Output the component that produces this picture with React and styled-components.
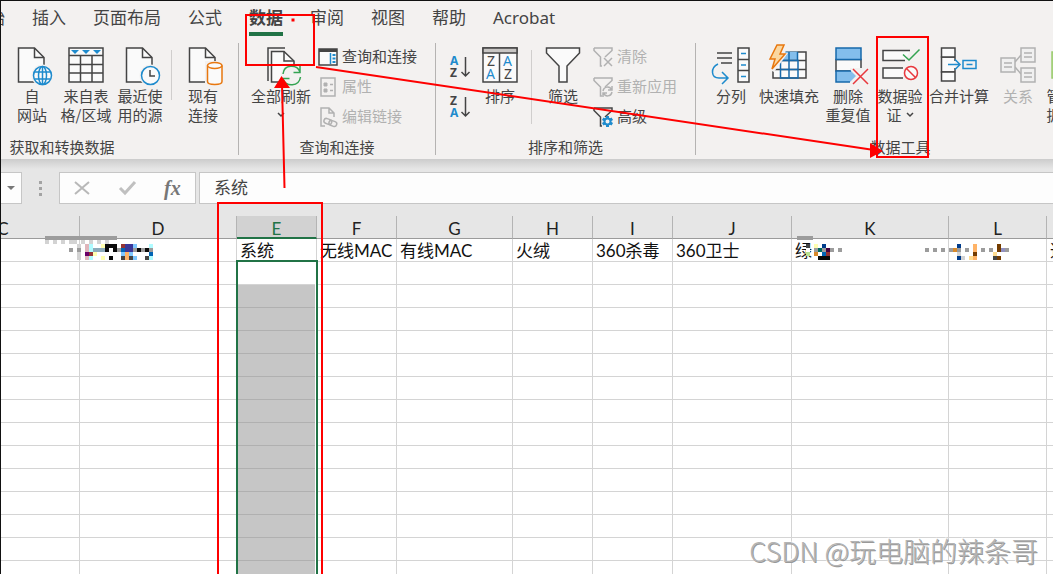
import styled, { createGlobalStyle } from "styled-components"

const GlobalStyle = createGlobalStyle`
    * {
        box-sizing: border-box;
    }

    body {
        margin: 0;
        background: #fff;
        font-family: "Noto Sans CJK SC", sans-serif;
        color: #444;
        overflow: hidden;
    }

    button, input {
        font: inherit;
        color: inherit;
        background: none;
        border: 0;
        padding: 0;
        margin: 0;
    }

    svg {
        display: block;
        overflow: visible;
        flex: none;
    }
`

const Page = styled.div`
    position: relative;
    height: 100vh;
    overflow: hidden;
    border-top: 1px solid #111;
    border-left: 1px solid #111;
    background: #fff;
`

/* ---------- ribbon ---------- */

const Tabs = styled.nav`
    display: flex;
    gap: 27px;
    height: 35px;
    margin-left: -30px;
    background: #f3f1f0;
    font-size: 17px;
`

const Tab = styled.button`
    flex: none;
    height: 35px;
    padding-top: 3px;
    line-height: 28px;
    font-family: "Noto Sans", "Noto Sans CJK SC", sans-serif;
    font-weight: ${({ $active }) => ($active ? 700 : 400)};
    border-bottom: 4px solid ${({ $active }) => ($active ? "#217346" : "transparent")};
    white-space: nowrap;
`

const Ribbon = styled.div`
    display: flex;
    height: 123px;
    padding: 7px 0 4px;
    background: #f3f1f0;
    overflow: hidden;
    font-size: 15px;
`

const Group = styled.section`
    display: flex;
    flex-direction: column;
    flex: none;
    width: ${({ $width }) => $width}px;
    margin-left: ${({ $shift }) => $shift || 0}px;
    border-right: 1px solid #b5b3b2;
`

const GroupBody = styled.div`
    display: flex;
    flex: 1;
    align-items: flex-start;
    justify-content: ${({ $end }) => ($end ? "flex-end" : "flex-start")};
    padding: 0 ${({ $right }) => $right || 0}px 0 ${({ $left }) => $left || 0}px;
`

const GroupLabel = styled.div`
    line-height: 16px;
    text-align: center;
`

const BigButton = styled.button`
    display: flex;
    flex-direction: column;
    align-items: center;
    flex: none;
    width: ${({ $width }) => $width || 54}px;
    padding-top: 4px;
    line-height: 19px;
    color: ${({ disabled }) => (disabled ? "#b1b1b1" : "#444")};
    white-space: nowrap;

    svg {
        margin-bottom: 1px;
    }
`

const LabelLine = styled.span`
    display: flex;
    align-items: center;
    justify-content: center;
    gap: 4px;
    height: 19px;

    svg {
        margin: 0;
    }
`

const Divider = styled.div`
    flex: none;
    width: 1px;
    height: ${({ $tall }) => ($tall ? 74 : 50)}px;
    margin: 7px 4px 0;
    background: #d0cecd;
`

const SmallList = styled.div`
    display: flex;
    flex-direction: column;
    margin: -1px 0 0 ${({ $left }) => $left || 0}px;
`

const SmallButton = styled.button`
    display: flex;
    align-items: center;
    gap: 4px;
    height: 30px;
    color: ${({ disabled }) => (disabled ? "#b1b1b1" : "#444")};
    white-space: nowrap;
`

const SmallLabel = styled.span`
    padding-bottom: 2px;
    line-height: 20px;
`

const SortColumn = styled.div`
    display: flex;
    flex-direction: column;
    gap: 16px;
    padding: 12px 2px 0 13px;
`

/* ---------- formula bar ---------- */

const FormulaBar = styled.div`
    display: flex;
    height: 57px;
    padding: 13px 0 12px;
    background: linear-gradient(#cccccc, #e6e6e6 10px);
`

const NameBox = styled.button`
    display: flex;
    align-items: center;
    justify-content: center;
    width: 21px;
    background: #fdfdfd;
    border: 1px solid #c6c6c6;
    border-left: 0;
`

const Grip = styled.div`
    display: flex;
    flex-direction: column;
    align-items: center;
    justify-content: center;
    gap: 3px;
    width: 37px;

    i {
        width: 3px;
        height: 3px;
        background: #a3a3a3;
    }
`

const FormulaActions = styled.div`
    display: flex;
    align-items: center;
    justify-content: space-around;
    width: 137px;
    margin-right: 3px;
    background: #fdfdfd;
    border: 1px solid #c6c6c6;
`

const FxButton = styled.button`
    font: italic bold 20px/24px "Liberation Serif", serif;
    color: #777;
`

const FormulaInput = styled.input`
    flex: 1;
    min-width: 0;
    padding: 0 14px 3px;
    background: #fdfdfd;
    border: 1px solid #c6c6c6;
    border-right: 0;
    font-size: 17px;
    outline: 0;
`

/* ---------- sheet ---------- */

const Sheet = styled.div`
    overflow: hidden;
`

const Table = styled.table`
    width: calc(100% + 174px);
    margin-left: -74px;
    table-layout: fixed;
    border-collapse: separate;
    border-spacing: 0;
    font-family: Lato, "Noto Sans CJK SC", sans-serif;
    font-size: 17px;
    color: #111;
`

const ColumnHead = styled.th`
    height: 23px;
    padding: ${({ $selected }) => ($selected ? 4 : 3)}px 0 0;
    line-height: ${({ $selected }) => ($selected ? 17 : 18)}px;
    font-weight: 400;
    color: ${({ $selected }) => ($selected ? "#217346" : "#222")};
    background: ${({ $selected }) => ($selected ? "#d2d2d2" : "#e6e6e6")};
    border-right: 1px solid #b4b4b4;
    border-bottom: ${({ $selected }) => ($selected ? "2px solid #217346" : "1px solid #9b9b9b")};
`

const Cell = styled.td`
    position: relative;
    height: 23px;
    padding: 2px 0 0 3px;
    line-height: 20px;
    white-space: nowrap;
    background: ${({ $filled }) => ($filled ? "#c6c6c6" : "#fff")};
    border-right: 1px solid #d4d4d4;
    border-bottom: 1px solid ${({ $filled }) => ($filled ? "#b0b0b0" : "#d4d4d4")};
`

const SelectionFrame = styled.div`
    position: absolute;
    z-index: 1;
    top: -2px;
    left: -1px;
    right: -2px;
    height: 400px;
    border: 2px solid #217346;
    box-shadow: inset -1px 0 0 #fff;
`

const Overlay = styled.svg`
    position: absolute;
    top: -1px;
    left: -1px;
    z-index: 2;
    pointer-events: none;
`

const Watermark = styled.div`
    position: absolute;
    right: 15px;
    bottom: 6px;
    z-index: 3;
    font-size: 27px;
    line-height: 34px;
    font-weight: 300;
    color: #b4b4b4;
    text-shadow: 1px 1px 0 #999, -1px -1px 0 #fff;
    white-space: nowrap;
`

/* ---------- icons ---------- */

const INK = "#444"
const BLUE = "#1e8bcd"
const PALE = "#b1b1b1"
const BG = "#f3f1f0"

const Icon = ({ w = 36, h = 38, children, ink = INK }) => (
    <svg width={w} height={h} fill="none" stroke={ink} strokeWidth="1.5" aria-hidden="true">
        {children}
    </svg>
)

const PageShape = () => (
    <>
        <path d="M4.5 1H20.5L30 10.5V35H4.5Z" fill="#fafafa" />
        <path d="M20.5 1V10.5H30" />
    </>
)

const WebIcon = () => (
    <Icon>
        <PageShape />
        <circle cx="28.5" cy="28.5" r="11" fill={BG} stroke="none" />
        <g stroke={BLUE}>
            <circle cx="28.5" cy="28.5" r="9" fill="#fafafa" />
            <ellipse cx="28.5" cy="28.5" rx="4" ry="9" />
            <path d="M28.5 19.5V37.5M20.5 25H36.5M20.5 32H36.5" />
        </g>
    </Icon>
)

const TableIcon = () => (
    <Icon>
        <path d="M1 1H35V35H1Z" fill="#fafafa" />
        <path d="M1 8.5H35M1 17.5H35M1 26H35M12.5 8V35M24 8V35" />
        <path d="M3 3h8l-4 4zM14 3h8l-4 4zM25 3h8l-4 4z" fill={BLUE} stroke="none" />
    </Icon>
)

const RecentIcon = () => (
    <Icon>
        <PageShape />
        <circle cx="28.5" cy="28.5" r="11" fill={BG} stroke="none" />
        <circle cx="28.5" cy="28.5" r="9" fill="#fafafa" stroke={BLUE} />
        <path d="M28 23V29H33" />
    </Icon>
)

const ConnectionIcon = () => (
    <Icon>
        <PageShape />
        <path d="M20 14H38V38H20Z" fill={BG} stroke="none" />
        <g stroke="#e8770e">
            <path d="M22.5 18.5V34.5C22.5 38.5 37 38.5 37 34.5V18.5" fill="#fafafa" />
            <ellipse cx="29.75" cy="18.5" rx="7.25" ry="3" fill="#fafafa" />
        </g>
    </Icon>
)

const RefreshIcon = () => (
    <Icon>
        <path d="M5 34V1H22" />
        <path d="M8.5 4.5H21L31 14V35H8.5Z" fill="#fafafa" />
        <path d="M21 4.5V14H31" />
        <circle cx="28.5" cy="28.5" r="11" fill={BG} stroke="none" />
        <path d="M20 27C21 17 34 17 37 25M37 19V25.5H30.5M37.5 30C36 40 23 40 20 32M20 38V31.5H26.5" stroke="#34a352" />
    </Icon>
)

const QueryIcon = () => (
    <Icon w={20} h={18}>
        <path d="M1 1H19V17H1Z" fill="#fafafa" />
        <path d="M1 2.5H19" strokeWidth="3" />
        <path d="M12.5 5V16" stroke={BLUE} />
        <path d="M14.5 7H17.5M14.5 10.5H17.5M14.5 14H17.5" stroke={BLUE} strokeWidth="2" />
    </Icon>
)

const PropsIcon = () => (
    <Icon w={20} h={20} ink={PALE}>
        <path d="M3 1H17V19H3Z" />
        <path d="M6 6H9V9H6ZM6 12H9V15H6Z" fill={PALE} strokeWidth="1" />
        <path d="M12 7.5H15M12 13.5H15" />
    </Icon>
)

const EditLinkIcon = () => (
    <Icon w={20} h={20} ink={PALE}>
        <path d="M7 19H3V1H11L16 6V10M11 1V6H16" />
        <rect x="6" y="12" width="8" height="5" rx="2.5" transform="rotate(20 10 14)" />
        <rect x="11" y="14" width="8" height="5" rx="2.5" transform="rotate(20 15 16)" />
    </Icon>
)

const Letter = styled.text`
    font: 700 12px "Noto Sans", sans-serif;
    stroke: none;
`

const ThinLetter = styled.text`
    font: 400 14px "Noto Sans", sans-serif;
    stroke: none;
`

const SortIcon = ({ first, second }) => (
    <Icon w={22} h={24}>
        <Letter x="1" y="10" fill={first === "A" ? BLUE : INK}>{first}</Letter>
        <Letter x="1" y="22" fill={second === "A" ? BLUE : INK}>{second}</Letter>
        <path d="M16.5 2V21M12.5 17L16.5 21L20.5 17" />
    </Icon>
)

const SortDialogIcon = () => (
    <Icon>
        <path d="M1 1H35V35H1Z" fill="#fafafa" />
        <path d="M1 1H35V6H1Z" fill="#c8c6c4" />
        <path d="M17.5 6V35" />
        <ThinLetter x="5" y="19" fill={INK}>Z</ThinLetter>
        <ThinLetter x="4" y="32" fill={BLUE}>A</ThinLetter>
        <ThinLetter x="21" y="19" fill={BLUE}>A</ThinLetter>
        <ThinLetter x="22" y="32" fill={INK}>Z</ThinLetter>
    </Icon>
)

const FilterIcon = () => (
    <Icon>
        <path d="M1.5 1H34.5V6L22 19V35H14V19L1.5 6Z" fill="#fafafa" />
    </Icon>
)

const SmallFilter = ({ kind }) => (
    <Icon w={20} h={20} ink={kind === "advanced" ? INK : PALE}>
        <path d="M1 1H19V3.5L12 10M1 1V3.5L7.5 10V19H9" />
        {kind === "clear" && <path d="M11 11L19 19M19 11L11 19" />}
        {kind === "reapply" && <path d="M10 14C11 9 17 9 18.5 13M19 9V13H15M19 15C18 20 12 20 10.5 16M10 20V16H14" />}
        {kind === "advanced" && (
            <g stroke={BLUE}>
                <path d="M14.5 9V20M9.7 11.7L19.3 17.3M19.3 11.7L9.7 17.3" strokeWidth="3" />
                <circle cx="14.5" cy="14.5" r="3" strokeWidth="2" fill={BG} />
            </g>
        )}
    </Icon>
)

const SplitIcon = () => (
    <Icon w={38}>
        <path d="M5 6H20M5 11H20M9 16H20" />
        <path d="M26 1H37V35H26Z" fill="#fafafa" />
        <path d="M26 12.5H37M26 23.5H37" />
        <path d="M29 6.5H34M29 18H34M29 29.5H34M6 17C-2 21 -1 31 7 31H15M10 25L16 31L10 37" stroke={BLUE} />
    </Icon>
)

const FlashIcon = () => (
    <Icon>
        <path d="M2 5H35V31H2Z" fill="#fafafa" />
        <path d="M10 4.5H26.5V13H10Z" fill="#83beec" stroke="none" />
        <path d="M2 22.5H35M9 13.5H35" />
        <path d="M9.5 13.5H27V31H9.5ZM18 5V31M26.5 5V13.5M9.5 22.5H26.5" stroke="#1769aa" />
        <path d="M3 -3H17L14 6H17L3 25L-1 23V8Z" fill={BG} stroke="none" />
        <path d="M6 -2H13L9 7H14L1 22L4 12H-1Z" fill="#fad7a0" stroke="#e8770e" />
    </Icon>
)

const DedupeIcon = () => (
    <Icon>
        <path d="M6 12.5H31V24H6Z" fill="#fafafa" />
        <path d="M6 1H31V12.5H6Z" fill="#83beec" stroke="#1769aa" />
        <path d="M20 21H39V38H20Z" fill={BG} stroke="none" />
        <path d="M6 24H21L26 29L20 35H6Z" fill="#83beec" stroke="none" />
        <path d="M21 24H6V35H20" stroke="#1769aa" />
        <path d="M23 22L38 37M38 22L23 37" stroke="#e8383d" />
    </Icon>
)

const ValidationIcon = () => (
    <Icon>
        <path d="M28 3.5H1V13.5H23M21 21H1V31H21" fill="#fafafa" />
        <path d="M21 7.5L27 13L37.5 2.5" stroke="#34a352" />
        <circle cx="29" cy="26" r="6.5" fill="#fafafa" stroke="#e8383d" />
        <path d="M24.5 21.5L33.5 30.5" stroke="#e8383d" />
    </Icon>
)

const MergeIcon = () => (
    <Icon>
        <path d="M14 10H0.5V25H14" fill="#fafafa" />
        <path d="M0.5 1H14V10H0.5ZM0.5 25H14V34H0.5ZM14 10V14M14 21V25" fill="#fafafa" />
        <path d="M7 17.5H19M14 12.5L19 17.5L14 22.5M22 13.5H35V21.5H22ZM25.5 17.5H31.5" stroke={BLUE} />
    </Icon>
)

const RelationIcon = () => (
    <Icon ink={PALE}>
        <path d="M15 15L21 8M15 20L21 27" />
        <path d="M1 11H15V25H1ZM21 1H35V15H21ZM21 21H35V35H21Z" fill="#f0f0f0" />
        <path d="M4 16H12M4 20H12M24 6H32M24 10H32M24 26H32M24 30H32" />
    </Icon>
)

const ModelIcon = () => (
    <Icon>
        <path d="M1 5H30V31H1Z" fill="#b8dc94" stroke="#9ccb70" />
    </Icon>
)

const Chevron = () => (
    <Icon w={8} h={6}>
        <path d="M1 1L4 4L7 1" />
    </Icon>
)

/* ---------- data ---------- */

const tabs = ["开始", "插入", "页面布局", "公式", "数据", "审阅", "视图", "帮助", "Acrobat"]

const columns = [
    { id: "C", width: 153 },
    { id: "D", width: 157 },
    { id: "E", width: 80, text: "系统" },
    { id: "F", width: 80, text: "无线MAC" },
    { id: "G", width: 116, text: "有线MAC" },
    { id: "H", width: 80, text: "火绒" },
    { id: "I", width: 80, text: "360杀毒" },
    { id: "J", width: 119, text: "360卫士" },
    { id: "K", width: 157, text: "绿" },
    { id: "L", width: 98 },
    { id: "M", text: "迅" },
]

const rows = Array.from({ length: 15 }, (_, i) => i)

const palette = {
    k: "#0a0a0a", d: "#444444", g: "#9c9c9c", l: "#d3d3d3", w: "#ffffff",
    p: "#dfb6bb", m: "#6a006a", r: "#943434", c: "#b0fbff", s: "#7fc8ff",
    b: "#0064b4", n: "#3b3797", o: "#ffb366", y: "#ffffb0", a: "#8dabba",
    t: "#006a60", e: "#b6e08e", z: "#743c00", v: "#9191c2", u: "#003c8c",
    f: "#d98a2b", h: "#ffdc90", q: "#400040",
}

// pixelated patches over the hidden headings, one letter per 4px block
const mosaics = [
    { x: 45, y: 236, rows: ["gggggggggggggggggg", "l.l.l.ll.l.l.l.l"] },
    { x: 69, y: 244, rows: ["..l", "g.g", "..l", "..l"] },
    { x: 85, y: 244, rows: ["pc..ykkkwrnnsw..c", "pcaaakwkgbnngkgkg", "mryw.w...sosw..wb", "pcw.y.k..dods..dc"] },
    { x: 797, y: 236, rows: ["gggg"] },
    { x: 806, y: 244, rows: ["d.y.u", "w.gtgqg.g", "e.fwbr", "...kkk"] },
    { x: 925, y: 244, rows: ["........u...o.....z", "g.g.g.gfg.g.o.g.g.zvg", ".......wl...z....hw", "........ul.ho....dz"] },
]

const Mosaic = ({ x, y, rows }) =>
    rows.flatMap((row, r) =>
        [...row].map((c, i) =>
            c === "." ? null : <rect key={r + "-" + i} x={x + i * 4} y={y + r * 4} width="4" height="4" fill={palette[c]} />
        )
    )

const Big = ({ icon, lines, arrow, ...rest }) => (
    <BigButton {...rest}>
        {icon}
        {lines.map((line, i) => (
            <LabelLine key={line}>
                {line}
                {arrow && i === lines.length - 1 && <Chevron />}
            </LabelLine>
        ))}
    </BigButton>
)

const Small = ({ icon, children, ...rest }) => (
    <SmallButton {...rest}>
        {icon}
        <SmallLabel>{children}</SmallLabel>
    </SmallButton>
)

export default function App() {
    return (
        <Page>
            <GlobalStyle />
            <Tabs>
                {tabs.map((tab) => (
                    <Tab key={tab} $active={tab === "数据"}>{tab}</Tab>
                ))}
            </Tabs>

            <Ribbon>
                <Group $width={353} $shift={-115}>
                    <GroupBody $end $right={8}>
                        <Big icon={<WebIcon />} lines={["自", "网站"]} />
                        <Big icon={<TableIcon />} lines={["来自表", "格/区域"]} />
                        <Big icon={<RecentIcon />} lines={["最近使", "用的源"]} />
                        <Divider />
                        <Big icon={<ConnectionIcon />} lines={["现有", "连接"]} />
                    </GroupBody>
                    <GroupLabel>获取和转换数据</GroupLabel>
                </Group>

                <Group $width={197}>
                    <GroupBody $left={8}>
                        <Big $width={68} icon={<RefreshIcon />} lines={["全部刷新", ""]} arrow />
                        <SmallList $left={3}>
                            <Small icon={<QueryIcon />}>查询和连接</Small>
                            <Small icon={<PropsIcon />} disabled>属性</Small>
                            <Small icon={<EditLinkIcon />} disabled>编辑链接</Small>
                        </SmallList>
                    </GroupBody>
                    <GroupLabel>查询和连接</GroupLabel>
                </Group>

                <Group $width={260}>
                    <GroupBody>
                        <SortColumn>
                            <button aria-label="升序"><SortIcon first="A" second="Z" /></button>
                            <button aria-label="降序"><SortIcon first="Z" second="A" /></button>
                        </SortColumn>
                        <Big icon={<SortDialogIcon />} lines={["排序"]} />
                        <Divider $tall />
                        <Big icon={<FilterIcon />} lines={["筛选"]} />
                        <SmallList $left={3}>
                            <Small icon={<SmallFilter kind="clear" />} disabled>清除</Small>
                            <Small icon={<SmallFilter kind="reapply" />} disabled>重新应用</Small>
                            <Small icon={<SmallFilter kind="advanced" />}>高级</Small>
                        </SmallList>
                    </GroupBody>
                    <GroupLabel>排序和筛选</GroupLabel>
                </Group>

                <Group $width={410}>
                    <GroupBody $left={12}>
                        <Big $width={46} icon={<SplitIcon />} lines={["分列"]} />
                        <Big $width={70} icon={<FlashIcon />} lines={["快速填充"]} />
                        <Big $width={48} icon={<DedupeIcon />} lines={["删除", "重复值"]} />
                        <Big $width={56} icon={<ValidationIcon />} lines={["数据验", "证"]} arrow />
                        <Big $width={62} icon={<MergeIcon />} lines={["合并计算"]} />
                        <Big $width={56} icon={<RelationIcon />} lines={["关系"]} disabled />
                        <Big $width={46} icon={<ModelIcon />} lines={["管理数", "据模型"]} />
                    </GroupBody>
                    <GroupLabel>数据工具</GroupLabel>
                </Group>
            </Ribbon>

            <FormulaBar>
                <NameBox aria-label="名称框">
                    <svg width="8" height="4"><path d="M0 0H8L4 4Z" fill="#777" /></svg>
                </NameBox>
                <Grip><i /><i /><i /></Grip>
                <FormulaActions>
                    <button aria-label="取消">
                        <svg width="16" height="14" stroke="#b8b8b8" strokeWidth="2"><path d="M1 1L15 13M15 1L1 13" /></svg>
                    </button>
                    <button aria-label="输入">
                        <svg width="17" height="14" fill="none" stroke="#c0c0c0" strokeWidth="3"><path d="M1 7L6 12L16 1" /></svg>
                    </button>
                    <FxButton aria-label="插入函数">fx</FxButton>
                </FormulaActions>
                <FormulaInput aria-label="编辑栏" defaultValue="系统" />
            </FormulaBar>

            <Sheet>
                <Table>
                    <colgroup>
                        {columns.map((col) => (
                            <col key={col.id} style={{ width: col.width }} />
                        ))}
                    </colgroup>
                    <thead>
                        <tr>
                            {columns.map((col) => (
                                <ColumnHead key={col.id} $selected={col.id === "E"}>{col.id}</ColumnHead>
                            ))}
                        </tr>
                    </thead>
                    <tbody>
                        {rows.map((row) => (
                            <tr key={row}>
                                {columns.map((col) => (
                                    <Cell key={col.id} $filled={col.id === "E" && row > 1}>
                                        {row === 0 && col.text}
                                        {row === 1 && col.id === "E" && <SelectionFrame />}
                                    </Cell>
                                ))}
                            </tr>
                        ))}
                    </tbody>
                </Table>
            </Sheet>

            <Overlay width="1053" height="574" fill="none" stroke="#fe0000" strokeWidth="2">
                <g stroke="none">
                    {mosaics.map((m, i) => (
                        <Mosaic key={i} {...m} />
                    ))}
                </g>
                <rect x="246" y="15" width="68" height="50" />
                <rect x="877" y="37" width="51" height="120" />
                <rect x="218" y="203" width="104" height="400" />
                <path d="M316 67L874 150M284.5 188L282 84" />
                <path d="M883 151L870 143V158ZM281.5 76L274 88H290ZM291.5 18.5h3v3h-3z" fill="#fe0000" stroke="none" />
            </Overlay>

            <Watermark>CSDN @玩电脑的辣条哥</Watermark>
        </Page>
    )
}
